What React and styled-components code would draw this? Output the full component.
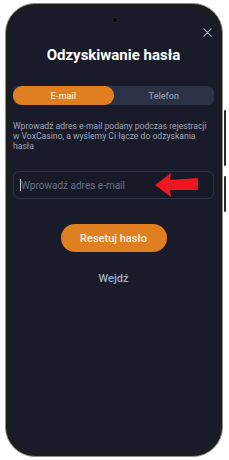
import React from "react";
import styled, { createGlobalStyle } from "styled-components";

const GlobalStyle = createGlobalStyle`
  html, body {
    margin: 0;
    padding: 0;
    background: #ffffff;
  }
  body {
    font-family: Roboto, "Liberation Sans", sans-serif;
  }
`;

function App() {
  return (
    <>
      <GlobalStyle />
      <Page>
        <Phone>
          <SideButton top={106} height={56} />
          <SideButton top={172} height={36} />
          <Screen>
            <Camera />
            <CloseButton aria-label="close">
              <svg width="9" height="9" viewBox="0 0 10 10">
                <path d="M1 1L9 9M9 1L1 9" stroke="#a3a8b5" strokeWidth="1.4" strokeLinecap="round" />
              </svg>
            </CloseButton>
            <Title>Odzyskiwanie hasła</Title>
            <Tabs>
              <Tab active>E-mail</Tab>
              <Tab>Telefon</Tab>
            </Tabs>
            <Info>
              Wprowadź adres e-mail podany podczas rejestracji w VoxCasino, a
              wyślemy Ci łącze do odzyskania hasła
            </Info>
            <InputWrap>
              <Caret />
              <Input placeholder="Wprowadź adres e-mail" />
              <Arrow width="46" height="26" viewBox="0 0 46 26">
                <polygon points="1,13 17,1 16,8 44,6 44,18 16,18 17,25" fill="#ee1620" />
              </Arrow>
            </InputWrap>
            <ResetButton>Resetuj hasło</ResetButton>
            <LoginLink>Wejdź</LoginLink>
          </Screen>
        </Phone>
      </Page>
    </>
  );
}

const Page = styled.div`
  padding: 3px 0 0 5px;
`;

const Phone = styled.div`
  position: relative;
  width: 208px;
  height: 444px;
  padding: 4px;
  background: #1c1c1c;
  border: 1px solid #8d8d8d;
  border-radius: 30px;
`;

const SideButton = styled.div`
  position: absolute;
  right: -4px;
  top: ${(p) => p.top}px;
  width: 2px;
  height: ${(p) => p.height}px;
  background: #2a2a2a;
  border-radius: 1px;
`;

const Screen = styled.div`
  position: relative;
  height: 100%;
  background: #1a1b2a;
  border-radius: 26px;
  display: flex;
  flex-direction: column;
  align-items: center;
  padding: 0 4px 0 3px;
  box-sizing: border-box;
  overflow: hidden;
`;

const Camera = styled.div`
  width: 4px;
  height: 4px;
  margin-top: 10px;
  margin-left: 2px;
  border-radius: 50%;
  background: #050505;
  box-shadow: 0 0 0 1px #2a2a30;
`;

const CloseButton = styled.button`
  position: absolute;
  top: 20px;
  right: 6px;
  padding: 0;
  border: none;
  background: none;
  display: flex;
`;

const Title = styled.h1`
  margin: 23px 0 0;
  font-size: 15px;
  line-height: 20px;
  font-weight: 700;
  color: #ffffff;
`;

const Tabs = styled.div`
  margin-top: 21px;
  width: 100%;
  height: 19px;
  display: flex;
  background: #2b3245;
  border-radius: 6px;
`;

const Tab = styled.div`
  flex: 1;
  display: flex;
  align-items: center;
  justify-content: center;
  font-size: 9px;
  font-weight: 500;
  border-radius: 9px;
  color: ${(p) => (p.active ? "#f6e6d6" : "#8c95a8")};
  background: ${(p) => (p.active ? "#e07f1f" : "transparent")};
`;

const Info = styled.p`
  margin: 16px 0 0;
  width: 100%;
  font-size: 8.6px;
  line-height: 10px;
  color: #9ea6b6;
`;

const InputWrap = styled.div`
  position: relative;
  margin-top: 20px;
  width: 100%;
  height: 28px;
  box-sizing: border-box;
  border: 1px solid #2d3446;
  border-radius: 6px;
  background: #171926;
  display: flex;
  align-items: center;
  padding-left: 6px;
`;

const Caret = styled.div`
  width: 1px;
  height: 12px;
  background: #c8ccd6;
`;

const Input = styled.input`
  flex: 1;
  min-width: 0;
  border: none;
  outline: none;
  background: transparent;
  padding: 0;
  font-family: Roboto, "Liberation Sans", sans-serif;
  font-size: 10px;
  color: #ffffff;
  &::placeholder {
    color: #69718a;
  }
`;

const Arrow = styled.svg`
  position: absolute;
  left: 140px;
  top: 0px;
`;

const ResetButton = styled.button`
  margin-top: 25px;
  width: 106px;
  height: 28px;
  border: none;
  border-radius: 14px;
  background: #e07f1f;
  color: #fbeee2;
  font-family: Roboto, "Liberation Sans", sans-serif;
  font-size: 11px;
  font-weight: 500;
`;

const LoginLink = styled.div`
  margin-top: 20px;
  font-size: 11px;
  font-weight: 500;
  color: #a6b0c4;
`;

export default App;
